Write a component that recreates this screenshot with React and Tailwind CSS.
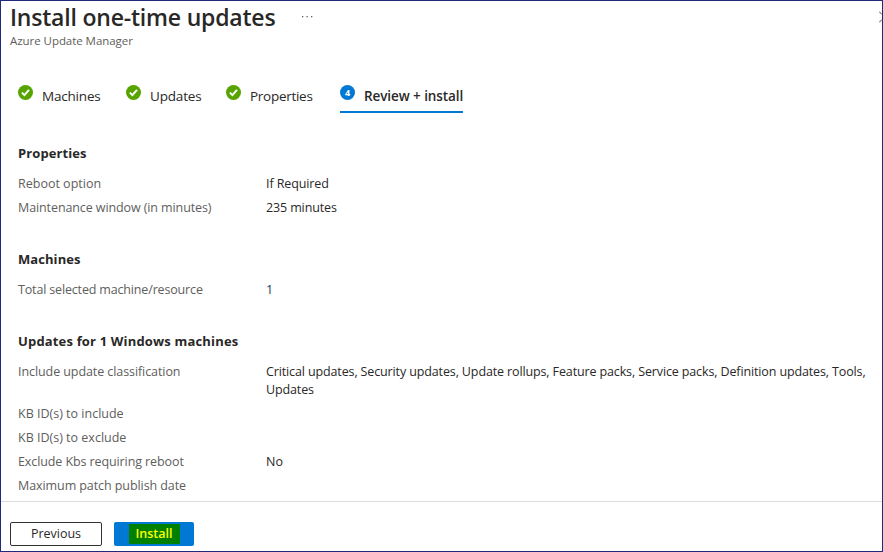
import React from "react";

function CheckBadge() {
  return (
    <svg className="mt-px size-[15px] shrink-0" viewBox="0 0 15 15">
      <circle cx="7.5" cy="7.5" r="7.5" fill="#57a300" />
      <path d="M3.9 7.6 L6.4 10.1 L11 4.8" fill="none" stroke="#fff" strokeWidth="2" />
    </svg>
  );
}

function Step({ label, className, track }) {
  return (
    <div className={`flex h-[29px] shrink-0 ${className}`}>
      <CheckBadge />
      <span className={`ml-[9px] mt-[2px] leading-5 text-[13.5px] ${track}`}>{label}</span>
    </div>
  );
}

function Row({ label, value, track = "", valueTrack = "", valueColor = "" }) {
  return (
    <div className="flex py-[3px] leading-[18px]">
      <div className={`w-[248px] shrink-0 text-[#605e5c] ${track}`}>{label}</div>
      <div className={`whitespace-pre ${valueTrack} ${valueColor}`}>{value}</div>
    </div>
  );
}

function Heading({ children, track }) {
  return <h2 className={`mb-[9px] text-[13px] font-bold leading-5 ${track}`}>{children}</h2>;
}

export default function App() {
  return (
    <div className="flex h-[552px] w-[883px] flex-col overflow-hidden border border-[#1f2a7a] bg-white font-['Open_Sans','Noto_Sans',sans-serif] text-[12.5px] whitespace-nowrap text-[#292827]">
      <header className="flex h-[83px] shrink-0 justify-between pl-[9px]">
        <div>
          <div className="flex h-[31px]">
            <h1 className="w-[292px] text-[23px] font-semibold leading-[33px] tracking-[-0.2px]">Install one-time updates</h1>
            <svg className="mt-[14px] h-[3px] w-[12px]" viewBox="0 0 12 3" fill="#605e5c">
              <rect x="0" y="1" width="1.3" height="1.3" />
              <rect x="4.5" y="1" width="1.3" height="1.3" />
              <rect x="9" y="1" width="1.3" height="1.3" />
            </svg>
          </div>
          <p className="text-[11.5px] leading-[18px] tracking-[-0.05px] text-[#605e5c]">Azure Update Manager</p>
        </div>
        <svg className="mt-[10px] h-3 w-[3px]" viewBox="0 0 3 12" fill="none" stroke="#484644" strokeWidth="1">
          <path d="M0 0.5 L3 3.5 M3 8.5 L0 11.5" />
        </svg>
      </header>
      <nav className="flex h-[59px] shrink-0 pl-[17px]">
        <Step label="Machines" className="w-[108px]" track="tracking-[-0.2px]" />
        <Step label="Updates" className="w-[100px]" track="tracking-[-0.17px]" />
        <Step label="Properties" className="w-[114px]" track="tracking-[-0.28px]" />
        <div className="flex h-[29px] w-[123px] border-b-2 border-[#0078d4]">
          <span className="mt-px flex size-[15px] shrink-0 items-center justify-center rounded-full bg-[#0078d4] text-[9px] font-bold leading-none text-white">4</span>
          <span className="ml-[9px] mt-[2px] text-[13.5px] font-semibold leading-5 tracking-[-0.08px]">Review + install</span>
        </div>
      </nav>
      <main className="h-[358px] shrink-0 overflow-hidden pl-[17px]">
        <section className="mb-[29px]">
          <Heading track="tracking-[0.1px]">Properties</Heading>
          <Row label="Reboot option" value="If Required" valueTrack="tracking-[-0.1px]" />
          <Row label="Maintenance window (in minutes)" value="235 minutes" track="tracking-[-0.1px]" valueTrack="tracking-[-0.13px]" />
        </section>
        <section className="mb-[29px]">
          <Heading track="tracking-[0.07px]">Machines</Heading>
          <Row label="Total selected machine/resource" value="1" track="tracking-[-0.16px]" valueColor="text-[#1b3a57]" />
        </section>
        <section>
          <Heading track="tracking-[0.17px]">Updates for 1 Windows machines</Heading>
          <Row
            label="Include update classification"
            track="tracking-[-0.08px]"
            valueTrack="tracking-[-0.128px]"
            value={"Critical updates, Security updates, Update rollups, Feature packs, Service packs, Definition updates, Tools,\nUpdates"}
          />
          <Row label="KB ID(s) to include" />
          <Row label="KB ID(s) to exclude" />
          <Row label="Exclude Kbs requiring reboot" value="No" track="tracking-[-0.1px]" />
          <Row label="Maximum patch publish date" track="tracking-[-0.08px]" />
        </section>
      </main>
      <footer className="flex flex-1 gap-3 border-t border-[#dcdcdc] pl-[9px] pt-5">
        <button className="flex h-6 w-[92px] items-center justify-center rounded-[2px] border border-[#323130] text-[12.5px]">Previous</button>
        <button className="flex h-6 w-20 items-center justify-center rounded-[2px] bg-[#0078d4]">
          <span className="flex h-5 w-[51px] items-center justify-center bg-[#008000] text-[12.5px] font-semibold text-[#ffff00]">Install</span>
        </button>
      </footer>
    </div>
  );
}
